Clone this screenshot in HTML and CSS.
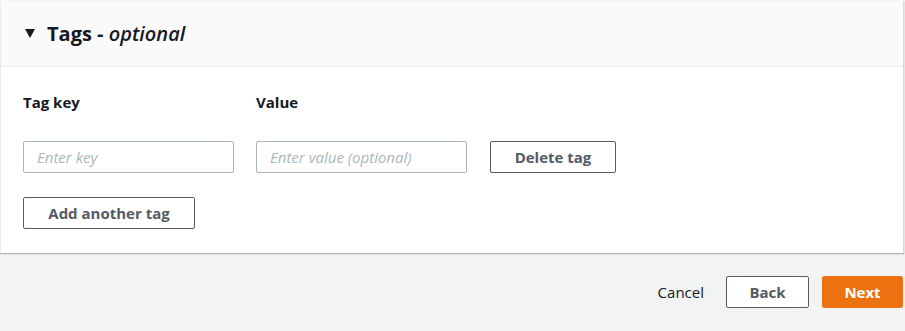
FILE: index.html
```html
<!DOCTYPE html>
<html>
<head>
    <title>Tags</title>
    <link rel="stylesheet" href="styles.css">
</head>
<body>
    <!-- Tags panel -->
    <div class="panel">
        <div class="panel-header">
            <span class="caret"></span>
            <h2>Tags - <i>optional</i></h2>
        </div>
        <div class="panel-body">
            <div class="tag-row labels">
                <label class="col">Tag key</label>
                <label class="col">Value</label>
            </div>
            <div class="tag-row">
                <input class="col" type="text" placeholder="Enter key">
                <input class="col" type="text" placeholder="Enter value (optional)">
                <button class="btn">Delete tag</button>
            </div>
            <button class="btn add-btn">Add another tag</button>
        </div>
    </div>

    <!-- Wizard actions -->
    <div class="actions">
        <a class="link-btn">Cancel</a>
        <button class="btn back-btn">Back</button>
        <button class="btn primary">Next</button>
    </div>
</body>
</html>
```

FILE: styles.css
```css
body {
    font-family: 'Open Sans', Roboto, sans-serif;
    background-color: #f2f3f3;
    color: #16191f;
    margin: 0;
}

.panel {
    background-color: #fff;
    margin: 1px 1px 0 0;
    border-left: 1px solid #eaeded;
    border-right: 1px solid #d5dbdb;
    box-shadow: 0 1px 1px 0 rgba(0, 28, 36, 0.3);
}

.panel-header {
    display: flex;
    align-items: center;
    height: 65px;
    padding: 0 23px;
    background-color: #fafafa;
    border-bottom: 1px solid #eaeded;
}

.caret {
    width: 0;
    height: 0;
    border-left: 5px solid transparent;
    border-right: 5px solid transparent;
    border-top: 9px solid #16191f;
    margin: 0 12px 0 1px;
}

.panel-header h2 {
    margin: 0;
    font-size: 20px;
    font-weight: 700;
}

.panel-header h2 i {
    font-weight: 600;
}

.panel-body {
    padding: 24px 22px 24px 22px;
}

.tag-row {
    display: flex;
    align-items: center;
    gap: 22px;
}

.labels {
    margin-bottom: 28px;
}

.labels label {
    font-size: 15px;
    font-weight: 700;
    line-height: 22px;
}

.col {
    width: 211px;
    box-sizing: border-box;
}

input[type="text"] {
    height: 32px;
    border: 1px solid #aab7b8;
    border-radius: 2px;
    padding: 0 13px;
    font-family: inherit;
    font-size: 15px;
    color: #16191f;
}

input::placeholder {
    color: #aab7b8;
    font-style: italic;
}

.btn {
    height: 32px;
    box-sizing: border-box;
    padding: 0 20px;
    background-color: #fff;
    border: 1px solid #545b64;
    border-radius: 2px;
    color: #545b64;
    font-family: inherit;
    font-size: 15px;
    font-weight: 700;
    cursor: pointer;
}

.tag-row .btn {
    width: 126px;
    margin-left: 1px;
}

.add-btn {
    margin-top: 24px;
    width: 172px;
}

/* footer buttons */
.actions {
    display: flex;
    justify-content: flex-end;
    align-items: center;
    gap: 13px;
    padding: 23px 2px 0 0;
}

.link-btn {
    font-size: 15px;
    color: #16191f;
    margin-right: 9px;
}

.back-btn {
    width: 83px;
}

.primary {
    width: 81px;
    background-color: #ec7211;
    border-color: #ec7211;
    color: #fff;
}
```
